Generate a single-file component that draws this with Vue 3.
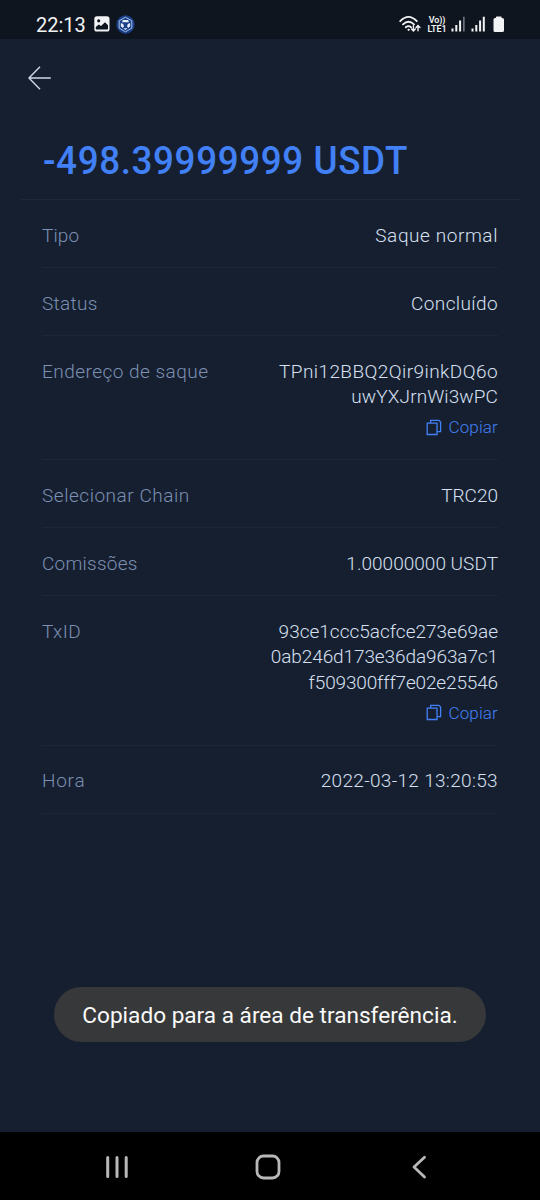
<script setup>
// Letter tracking (px) is kept next to each string.
const rows = [
  { label: 'Tipo', lt: 0.1, lines: [['Saque normal', 0.58]] },
  { label: 'Status', lt: 0.35, lines: [['Concluído', 0.4]] },
  { label: 'Endereço de saque', lt: 0.47, lines: [['TPni12BBQ2Qir9inkDQ6o', 0.42], ['uwYXJrnWi3wPC', 0.1]], copy: true },
  { label: 'Selecionar Chain', lt: 0.53, lines: [['TRC20', 0]] },
  { label: 'Comissões', lt: 0.25, lines: [['1.00000000 USDT', 0.02]] },
  { label: 'TxID', lt: 0.4, lines: [['93ce1ccc5acfce273e69ae', 0], ['0ab246d173e36da963a7c1', -0.1], ['f509300fff7e02e25546', -0.15]], copy: true },
  { label: 'Hora', lt: 0.75, lines: [['2022-03-12 13:20:53', 0.33]] },
]
</script>

<template>
  <div class="screen">
    <header class="status">
      <span class="clock">22:13</span>
      <svg class="photo" width="16" height="16" viewBox="0 0 16 16">
        <rect x=".3" y=".3" width="15.2" height="15.2" rx="2.6" fill="#f2f3f5" />
        <circle cx="4.7" cy="4.8" r="1.6" fill="#0f151f" />
        <path d="M1.8 12.8V11l3-2.6 2.2 1.7 4-3.8 3 3v3.5q0 .6-.7.6H2.5q-.7 0-.7-.6z" fill="#0f151f" />
      </svg>
      <svg class="coin" width="19" height="19" viewBox="0 0 19 19">
        <circle cx="9.5" cy="9.5" r="9.2" fill="#1a3f86" />
        <path d="M9.5 2.2 15.8 5.8v7.4L9.5 16.8 3.2 13.2V5.8z" fill="none" stroke="#a9c2ed" stroke-width="1" />
        <path d="M6.8 4.9h5.4l.7 2.3H6.1zM4.9 8l2.3 1 .8 2.200-1.300 1.700-1.900-1.600zM14.100 8l-2.300 1-.8 2.200 1.300 1.700 1.900-1.600zM7.400 13.300h4.200L9.500 15z" fill="#e6edfa" />
      </svg>
      <svg class="wifi" width="23" height="19" viewBox="0 0 23 19" fill="none" stroke="#f2f3f5" stroke-width="1.8" stroke-linecap="round">
        <path d="M1.2 6.2Q9.5-2.3 17.8 6.2M4 9.4q5.5-5.2 11 0M6.8 12.3q2.7-2.3 5.3 0" />
        <circle cx="9.5" cy="14.8" r=".7" fill="#f2f3f5" stroke-width=".8" />
        <path d="M14.4 10.7v5.2m-1.9-1.8 1.9 1.9 1.9-1.9M19 15.8v-5.2m-1.9 1.9L19 10.6l1.9 1.9" stroke-width="1.4" />
      </svg>
      <span class="lte"><b>Vo))</b><b>LTE1</b></span>
      <svg class="sig1" width="15" height="16" viewBox="0 0 15 16">
        <path d="M.5 12.5h2v3h-2zM4.3 9h2v6.5h-2zM8.1 4.5h2v11h-2z" fill="#f2f3f5" />
        <path d="M12 .8h1.7v14.7H12z" fill="#6c727d" />
      </svg>
      <svg class="sig2" width="15" height="16" viewBox="0 0 15 16">
        <path d="M.5 12.5h2v3h-2zM4.3 9h2v6.5h-2zM8.1 4.5h2v11h-2zM11.8.8h2v14.7h-2z" fill="#f2f3f5" />
      </svg>
      <svg class="battery" width="12" height="17" viewBox="0 0 12 17">
        <path d="M3.6.5h4.3q.7 0 .7.7V2h.8q1.6 0 1.6 1.6v10.900q0 1.600-1.600 1.600H2Q.5 16.100.5 14.500V3.600Q.5 2 2 2h.9v-.8q0-.7.7-.7z" fill="#f2f3f5" />
      </svg>
    </header>

    <main>
      <svg class="back" width="24" height="24" viewBox="0 0 24 24" fill="none" stroke="#ced8e8" stroke-width="1.4">
        <path d="M12 .8 1 12l11 11.200M1.200 12h21.600" />
      </svg>
      <h1><span>-498.39999999 USDT</span></h1>
      <section class="list">
        <div v-for="r in rows" :key="r.label" class="row">
          <span class="label" :style="{ letterSpacing: r.lt + 'px' }">{{ r.label }}</span>
          <div class="value">
            <span v-for="[text, ls] in r.lines" :key="text" :style="{ letterSpacing: ls + 'px' }">{{ text }}</span>
            <div v-if="r.copy" class="copy">
              <svg width="16" height="17" viewBox="0 0 16 17" fill="none" stroke="#4280f6" stroke-width="1.3">
                <path d="M1.200 4.200h9.800v11.300H1.200z" />
                <path d="M4.600 4V1.300h8.200l1.800 1.700v9.700h-3.400" />
              </svg>
              <span>Copiar</span>
            </div>
          </div>
        </div>
      </section>
    </main>

    <div class="toast">Copiado para a área de transferência.</div>

    <nav>
      <svg width="24" height="26" viewBox="0 0 24 26" stroke="#b8b8b8" stroke-width="3" stroke-linecap="round">
        <path d="M2.700 3.500v19M12 3.500v19M21.200 3.500v19" />
      </svg>
      <svg class="home" width="26" height="26" viewBox="0 0 26 26" fill="none" stroke="#b8b8b8" stroke-width="2.800">
        <rect x="2" y="2" width="22" height="22" rx="6.500" />
      </svg>
      <svg class="prev" width="16" height="26" viewBox="0 0 16 26" fill="none" stroke="#b8b8b8" stroke-width="2.800" stroke-linecap="round" stroke-linejoin="round">
        <path d="M13.500 3.300 3 13l10.500 10" />
      </svg>
    </nav>
  </div>
</template>

<style>
html, body { background: #161f30; }
</style>

<style scoped>
.screen {
  width: 540px; height: 1200px; position: relative; overflow: hidden;
  display: flex; flex-direction: column;
  background: #161f30; font-family: Roboto, "Liberation Sans", sans-serif;
}
svg { display: block; flex: none; }
.status {
  height: 39px; box-sizing: border-box; padding: 9px 35px 0 36px; flex: none;
  display: flex; align-items: center; background: #0f151f; color: #f2f3f5;
}
.clock { width: 50px; font-size: 20px; line-height: 24px; margin-top: 1px; }
.photo { margin-left: 8px; }
.coin { margin-left: 6px; }
.wifi { margin-left: auto; }
.lte { margin: 1px 0 0 4px; width: 22px; display: flex; flex-direction: column; align-items: center; }
.lte b { font-size: 9px; line-height: 9px; font-weight: 600; letter-spacing: -0.1px; white-space: nowrap; }
.sig1 { margin-left: 3px; }
.sig2 { margin-left: 5px; }
.battery { margin-left: 7px; }
main { flex: 1; padding-top: 27px; }
.back { margin-left: 28px; }
h1 {
  margin: 0 20px; height: 110px; box-sizing: border-box; padding: 48px 0 0 23px;
  border-bottom: 1px solid #1c273a; color: #4280f6;
  font-size: 39.5px; line-height: 46px; font-weight: 500; letter-spacing: 0.65px; white-space: nowrap;
}
h1 span { display: inline-block; transform: scaleX(0.932); transform-origin: left; }
.list { margin: 0 42px; }
.row {
  display: flex; justify-content: space-between; padding: 22.900px 0 18.620px;
  border-bottom: 1px solid #1b2639; font-size: 19px; line-height: 25.500px; font-weight: 300;
}
.label { color: #7b90b2; white-space: nowrap; }
.value { display: flex; flex-direction: column; align-items: flex-end; color: #d6e0f1; white-space: nowrap; }
.copy {
  display: flex; align-items: center; gap: 6px; height: 30.500px; padding-top: 6px; box-sizing: border-box;
  color: #4280f6; font-size: 17px; letter-spacing: 0.15px;
}
.copy svg { margin-bottom: 2px; }
.toast {
  position: absolute; left: 54px; top: 987px; width: 432px; height: 55px; border-radius: 28px;
  background: #373839; color: #fafafa; text-align: center; font-size: 22.600px; line-height: 58px; white-space: nowrap;
}
nav {
  height: 68px; flex: none; box-sizing: border-box; padding: 2px 113px 0 105px; background: #000;
  display: flex; align-items: center;
}
.home { margin-left: 126px; }
.prev { margin-left: auto; }
</style>
